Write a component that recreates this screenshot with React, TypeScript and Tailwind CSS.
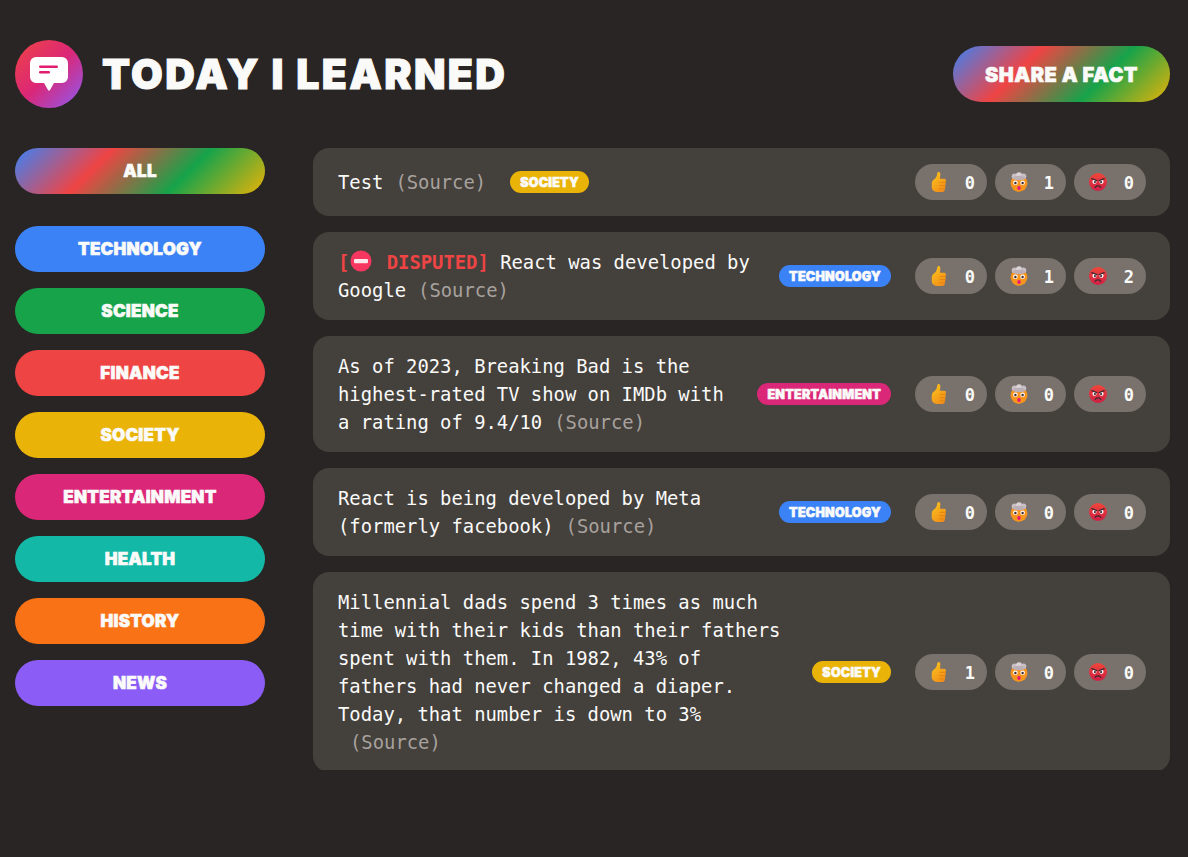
const CATEGORIES = [
  { name: 'technology', color: 'bg-[#3b82f6]' },
  { name: 'science', color: 'bg-[#16a34a]' },
  { name: 'finance', color: 'bg-[#ef4444]' },
  { name: 'society', color: 'bg-[#eab308]' },
  { name: 'entertainment', color: 'bg-[#db2777]' },
  { name: 'health', color: 'bg-[#14b8a6]' },
  { name: 'history', color: 'bg-[#f97316]' },
  { name: 'news', color: 'bg-[#8b5cf6]' },
]

const FACTS = [
  { id: 1, text: 'Test', category: 'society', votes: [0, 1, 0] },
  { id: 2, text: 'React was developed by Google', category: 'technology', votes: [0, 1, 2], disputed: true },
  { id: 3, text: 'As of 2023, Breaking Bad is the highest-rated TV show on IMDb with a rating of 9.4/10', category: 'entertainment', votes: [0, 0, 0] },
  { id: 4, text: 'React is being developed by Meta (formerly facebook)', category: 'technology', votes: [0, 0, 0] },
  { id: 5, text: 'Millennial dads spend 3 times as much time with their kids than their fathers spent with them. In 1982, 43% of fathers had never changed a diaper. Today, that number is down to 3%', category: 'society', votes: [1, 0, 0] },
]

const display = "font-['Inter',sans-serif] font-black uppercase text-[#fafaf9] [-webkit-text-stroke:0.6px_#fafaf9]"
const rainbow = 'bg-[linear-gradient(135deg,#3b82f6,#ef4444,#16a34a,#eab308)]'

function Logo() {
  return (
    <div className="flex h-[68px] w-[68px] items-center justify-center rounded-full bg-[linear-gradient(135deg,#ef4444,#db2777,#8b5cf6)]">
      <svg width="40" height="36" viewBox="0 0 40 36">
        <path d="M7 1h26a6 6 0 0 1 6 6v14a6 6 0 0 1-6 6h-8l-4 7a1.2 1.2 0 0 1-2 0l-4-7H7a6 6 0 0 1-6-6V7a6 6 0 0 1 6-6z" fill="#fff" />
        <rect x="10" y="9.5" width="19" height="2.4" rx="1.2" fill="#e11d6f" />
        <rect x="10" y="15" width="11" height="2.4" rx="1.2" fill="#e11d6f" />
      </svg>
    </div>
  )
}

function ThumbIcon() {
  return (
    <svg width="22" height="22" viewBox="0 0 20 20" className="-mx-px">
      <defs>
        <linearGradient id="thumb" x1="0.2" y1="0" x2="0.8" y2="1">
          <stop offset="0" stopColor="#fcc21b" />
          <stop offset="1" stopColor="#f08c1a" />
        </linearGradient>
      </defs>
      <path d="M9.6 1c1.3 0 1.8 1.2 1.6 2.6L10.9 7h3.900c1.100 0 1.600.8 1.500 1.600l-.9 8.200c-.2 1.300-1 2.200-2.400 2.200H8c-2.600 0-4.600-1.700-4.600-4.400v-3.200c0-1.600.8-2.600 2-3.600C7 6.700 8.200 4.800 8.400 2.400 8.500 1.500 8.900 1 9.600 1z" fill="url(#thumb)" />
      <path d="M10.900 10.300h5M10.700 13.300h4.800M10.800 16.200h4.200" stroke="#e2820f" strokeWidth="0.8" strokeLinecap="round" />
    </svg>
  )
}

function MindBlownIcon() {
  return (
    <svg width="20" height="20" viewBox="0 0 20 20">
      <circle cx="10" cy="11.300" r="8.400" fill="#f7941d" />
      <circle cx="5.600" cy="4.300" r="2.900" fill="#c9bfc4" />
      <circle cx="10" cy="3.200" r="3" fill="#dcd5d8" />
      <circle cx="14.400" cy="4.300" r="2.900" fill="#c9bfc4" />
      <ellipse cx="10" cy="6" rx="6.500" ry="2.200" fill="#bcb0b6" />
      <circle cx="6.400" cy="10.800" r="2.300" fill="#fff" />
      <circle cx="13.600" cy="10.800" r="2.300" fill="#fff" />
      <circle cx="6.400" cy="11" r="1.200" fill="#402a32" />
      <circle cx="13.600" cy="11" r="1.200" fill="#402a32" />
      <ellipse cx="10" cy="16" rx="1.700" ry="2.100" fill="#e5177b" />
    </svg>
  )
}

function AngryIcon() {
  return (
    <svg width="20" height="20" viewBox="0 0 20 20">
      <defs>
        <linearGradient id="angry" x1="0.5" y1="0" x2="0.5" y2="1">
          <stop offset="0" stopColor="#f0473a" />
          <stop offset="1" stopColor="#cf1f45" />
        </linearGradient>
      </defs>
      <circle cx="10" cy="10" r="9" fill="url(#angry)" />
      <circle cx="6.500" cy="9.800" r="2.100" fill="#fff" />
      <circle cx="13.500" cy="9.800" r="2.100" fill="#fff" />
      <circle cx="6.900" cy="10.100" r="1.100" fill="#402a32" />
      <circle cx="13.100" cy="10.100" r="1.100" fill="#402a32" />
      <path d="M3.800 6.600l5 2M16.200 6.600l-5 2" stroke="#402a32" strokeWidth="1.300" strokeLinecap="round" />
      <path d="M7.200 15.200c1.600-1.700 4-1.700 5.600 0" stroke="#402a32" strokeWidth="1.300" fill="none" strokeLinecap="round" />
    </svg>
  )
}

function NoEntryIcon() {
  return (
    <svg width="22" height="22" viewBox="0 0 22 22" className="ml-px mr-[3px] inline-block align-[-3px]">
      <circle cx="11" cy="11" r="10.500" fill="#f7375f" />
      <rect x="4" y="9" width="14" height="4.200" rx="1" fill="#fde8ec" />
    </svg>
  )
}

function VoteButton({ icon, count, width }: { icon: React.ReactNode; count: number; width: string }) {
  return (
    <button className={`flex h-9 ${width} items-center justify-between rounded-full bg-[#78716c] pl-[14px] pr-3 font-['DejaVu_Sans_Mono',monospace] text-[17px] font-bold text-[#fafaf9]`}>
      {icon}
      <span className="pt-[3px]">{count}</span>
    </button>
  )
}

function Fact({ fact }: { fact: (typeof FACTS)[number] }) {
  const category = CATEGORIES.find(c => c.name === fact.category)
  return (
    <li className="flex items-center gap-6 rounded-2xl bg-[#44403c] py-4 pl-[25px] pr-6">
      <p className="translate-y-px font-['DejaVu_Sans_Mono',monospace] text-[18.85px] leading-7 text-[#fafaf9]">
        {fact.disputed && (
          <span className="font-bold text-[#ef4444]">
            [<NoEntryIcon /> DISPUTED]{' '}
          </span>
        )}
        {fact.text}
        <a className="ml-3 text-[#a8a29e]">(Source)</a>
      </p>
      <span className={`${display} ${category?.color} shrink-0 rounded-full px-[10px] pb-[2px] pt-[4px] text-[12.5px] leading-4 tracking-[0.25px] [-webkit-text-stroke:0.3px_#fafaf9]`}>
        {fact.category}
      </span>
      <div className="ml-auto flex shrink-0 gap-2">
        <VoteButton icon={<ThumbIcon />} count={fact.votes[0]} width="w-[72px]" />
        <VoteButton icon={<MindBlownIcon />} count={fact.votes[1]} width="w-[71px]" />
        <VoteButton icon={<AngryIcon />} count={fact.votes[2]} width="w-[72px]" />
      </div>
    </li>
  )
}

export default function App() {
  return (
    <div className="h-[857px] overflow-hidden bg-[#292524] pl-[15px] pr-[18px] pt-10">
      <header className="mb-10 flex items-center justify-between">
        <div className="flex items-center gap-[19px]">
          <Logo />
          <h1 className={`${display} text-[41px] leading-[68px] tracking-[2.35px] [-webkit-text-stroke:1px_#fafaf9]`}>Today I Learned</h1>
        </div>
        <button className={`${display} ${rainbow} h-14 w-[217px] rounded-full pt-px text-[20px] tracking-[0.5px]`}>Share a fact</button>
      </header>

      <main className="flex items-start gap-12">
        <aside className="w-[250px] shrink-0">
          <ul className="flex flex-col gap-4">
            <li className="mb-4">
              <button className={`${display} ${rainbow} h-[46px] w-full rounded-full pt-[2px] text-[17px] tracking-[0.25px]`}>All</button>
            </li>
            {CATEGORIES.map(cat => (
              <li key={cat.name}>
                <button className={`${display} ${cat.color} h-[46px] w-full rounded-full pt-[2px] text-[17px] tracking-[0.25px]`}>{cat.name}</button>
              </li>
            ))}
          </ul>
        </aside>

        <ul className="flex h-[622px] min-w-0 flex-1 flex-col gap-4 overflow-hidden">
          {FACTS.map(fact => (
            <Fact key={fact.id} fact={fact} />
          ))}
        </ul>
      </main>
    </div>
  )
}
